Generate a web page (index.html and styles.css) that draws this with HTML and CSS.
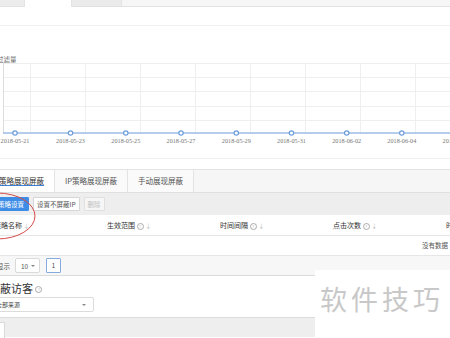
FILE: index.html
```html
<!DOCTYPE html>
<html lang="zh">
<head>
  <meta charset="UTF-8">
  <title>展现屏蔽</title>
  <link rel="stylesheet" href="styles.css">
</head>
<body>
  <div class="top-tabs">
    <span class="tt tt-a"></span>
    <span class="tt tt-b"></span>
    <span class="tt tt-c"></span>
  </div>
  <div class="head-strip"></div>

  <!-- 过滤量趋势 -->
  <div class="chart-box">
    <div class="chart-title">过滤量</div>
    <svg class="chart" width="450" height="95" viewBox="0 0 450 95">
      <g stroke="#efefef" stroke-width="1">
        <line x1="3" y1="0.5" x2="450" y2="0.5"/>
        <line x1="3" y1="14.5" x2="450" y2="14.5"/>
        <line x1="3" y1="28.5" x2="450" y2="28.5"/>
        <line x1="3" y1="43.5" x2="450" y2="43.5"/>
        <line x1="3" y1="57.5" x2="450" y2="57.5"/>
        <line x1="30.5" y1="0" x2="30.5" y2="70"/>
        <line x1="85.5" y1="0" x2="85.5" y2="70"/>
        <line x1="140.5" y1="0" x2="140.5" y2="70"/>
        <line x1="195.5" y1="0" x2="195.5" y2="70"/>
        <line x1="250.5" y1="0" x2="250.5" y2="70"/>
        <line x1="305.5" y1="0" x2="305.5" y2="70"/>
        <line x1="360.5" y1="0" x2="360.5" y2="70"/>
        <line x1="415.5" y1="0" x2="415.5" y2="70"/>
      </g>
      <line x1="3.5" y1="0" x2="3.5" y2="70" stroke="#dcdcdc"/>
      <line x1="3" y1="70" x2="450" y2="70" stroke="#9dbde6" stroke-width="1.5"/>
      <g fill="#fff" stroke="#6b9ddb" stroke-width="1.2">
        <circle cx="15" cy="70" r="2.2"/>
        <circle cx="70.5" cy="70" r="2.2"/>
        <circle cx="125.8" cy="70" r="2.2"/>
        <circle cx="181" cy="70" r="2.2"/>
        <circle cx="236.3" cy="70" r="2.2"/>
        <circle cx="291.5" cy="70" r="2.2"/>
        <circle cx="346.7" cy="70" r="2.2"/>
        <circle cx="401.8" cy="70" r="2.2"/>
      </g>
      <g class="axis-label" text-anchor="middle">
        <text x="15" y="80">2018-05-21</text>
        <text x="70.5" y="80">2018-05-23</text>
        <text x="125.8" y="80">2018-05-25</text>
        <text x="181" y="80">2018-05-27</text>
        <text x="236.3" y="80">2018-05-29</text>
        <text x="291.5" y="80">2018-05-31</text>
        <text x="346.7" y="80">2018-06-02</text>
        <text x="401.8" y="80">2018-06-04</text>
        <text x="457" y="80">2018-06-06</text>
      </g>
    </svg>
  </div>

  <div class="tabs">
    <div class="tab active"><span>策略展现屏蔽</span></div>
    <div class="tab"><span>IP策略展现屏蔽</span></div>
    <div class="tab"><span>手动展现屏蔽</span></div>
  </div>

  <div class="toolbar">
    <button class="btn btn-primary">策略设置</button>
    <button class="btn">设置不屏蔽IP</button>
    <button class="btn btn-disabled">删除</button>
  </div>

  <div class="thead">
    <div class="col">策略名称 <i class="sort">↓</i></div>
    <div class="col">生效范围 <i class="q">?</i> <i class="sort">↓</i></div>
    <div class="col">时间间隔 <i class="q">?</i> <i class="sort">↓</i></div>
    <div class="col">点击次数 <i class="q">?</i> <i class="sort">↓</i></div>
    <div class="col">时段</div>
  </div>
  <div class="empty-row">没有数据</div>
  <div class="pager">
    <span class="pager-label">每页显示</span>
    <span class="page-size">10 <i class="caret"></i></span>
    <span class="page-num">1</span>
  </div>

  <div class="visitor">
    <div class="visitor-title">屏蔽访客 <i class="q q-big">?</i></div>
    <div class="select">全部来源 <i class="caret"></i></div>
  </div>
  <div class="bottom-bar">
    <div class="mini-box"></div>
  </div>

  <div class="watermark">软件技巧</div>
  <svg class="mark" width="450" height="338">
    <ellipse cx="-3" cy="216" rx="38" ry="23" fill="none" stroke="#d64a4a" stroke-width="1"/>
  </svg>
</body>
</html>
```

FILE: styles.css
```css
body {
  margin: 0;
  width: 450px;
  height: 338px;
  overflow: hidden;
  position: relative;
  background: #fff;
  font-family: "Noto Sans CJK SC", sans-serif;
  font-size: 7px;
  color: #444;
}
i {
  font-style: normal;
}
.top-tabs {
  display: flex;
  height: 6px;
  background: #f6f6f6;
  border-bottom: 1px solid #e2e2e2;
}
.tt {
  border-right: 1px solid #e4e4e4;
}
.tt-a {
  width: 24px;
  background: #ececec;
}
.tt-b {
  width: 46px;
  height: 7px;
  background: #fff;
}
.tt-c {
  width: 49px;
  background: #ebebeb;
}
.head-strip {
  height: 18px;
  border-bottom: 1px solid #f0f0f0;
}
.chart-box {
  padding-top: 30px;
  border-bottom: 1px solid #eeeeee;
  margin-bottom: 10px;
}
.chart-title {
  height: 7px;
  line-height: 7px;
  font-size: 6.5px;
  color: #666;
  margin-left: -3px;
}
.chart {
  display: block;
}
.axis-label {
  font-family: "Liberation Serif", serif;
  font-size: 6.2px;
  fill: #777;
}
.tabs {
  display: flex;
  height: 22px;
  margin-left: -11px;
  background: #f6f6f6;
  border-top: 1px solid #e3e3e3;
  border-bottom: 1px solid #e0e0e0;
}
.tab {
  padding: 0 10px;
  line-height: 22px;
  font-size: 7.5px;
  color: #555;
  background: #fafafa;
  border-right: 1px solid #e3e3e3;
}
.tab.active {
  background: #fff;
}
.tab.active span {
  display: inline-block;
  line-height: 8px;
  color: #333;
  border-bottom: 1.5px solid #3a7fd8;
}
.toolbar {
  display: flex;
  align-items: center;
  gap: 4px;
  height: 22px;
  margin-left: -7px;
  background: #eeeeee;
}
.btn {
  height: 14px;
  padding: 0 3px;
  font-family: inherit;
  font-size: 6.5px;
  color: #555;
  background: #fff;
  border: 1px solid #d6d6d6;
  border-radius: 1px;
}
.btn-primary {
  padding: 0 4px;
  color: #fff;
  background: #3d8ce6;
  border-color: #3d8ce6;
}
.btn-disabled {
  color: #c0c0c0;
  background: #f6f6f6;
  border-color: #e0e0e0;
}
.thead {
  display: flex;
  align-items: center;
  height: 20px;
  margin-left: -6px;
  border-bottom: 1px solid #e6e6e6;
  color: #333;
}
.col {
  width: 113px;
  flex-shrink: 0;
}
.sort {
  color: #bbb;
  font-size: 6px;
}
.q {
  display: inline-block;
  width: 5px;
  height: 5px;
  line-height: 5px;
  text-align: center;
  font-size: 4px;
  color: #aaa;
  border: 0.8px solid #aaa;
  border-radius: 50%;
  vertical-align: 0;
}
.empty-row {
  height: 19px;
  line-height: 19px;
  text-align: right;
  padding-right: 2px;
  font-size: 6.5px;
  color: #555;
  border-bottom: 1px solid #e6e6e6;
}
.pager {
  display: flex;
  align-items: center;
  height: 19px;
  margin-left: -16px;
  background: #f7f7f7;
  border-bottom: 1px solid #dcdcdc;
}
.pager-label {
  font-size: 6.5px;
  color: #555;
  margin-right: 5px;
}
.page-size {
  display: flex;
  align-items: center;
  justify-content: space-between;
  box-sizing: border-box;
  width: 25px;
  height: 15px;
  padding: 0 4px 0 5px;
  font-size: 6.5px;
  color: #555;
  background: #fff;
  border: 1px solid #dadada;
  border-radius: 2px;
}
.caret {
  width: 0;
  height: 0;
  border-left: 2px solid transparent;
  border-right: 2px solid transparent;
  border-top: 2px solid #888;
}
.page-num {
  box-sizing: border-box;
  width: 15px;
  height: 15px;
  margin-left: 6px;
  line-height: 13px;
  text-align: center;
  font-size: 6px;
  color: #444;
  background: #fff;
  border: 1px solid #86acdf;
  border-radius: 1px;
}
.visitor {
  height: 41px;
  margin-left: -11px;
  padding-top: 5px;
  box-sizing: border-box;
}
.visitor-title {
  height: 16px;
  line-height: 14px;
  font-size: 11px;
  color: #333;
}
.q-big {
  width: 5px;
  height: 5px;
  vertical-align: 2px;
}
.select {
  display: flex;
  align-items: center;
  justify-content: space-between;
  box-sizing: border-box;
  width: 105px;
  height: 15px;
  padding: 0 7px 0 6px;
  font-size: 6px;
  color: #444;
  background: #fff;
  border: 1px solid #dcdcdc;
  border-radius: 2px;
}
.bottom-bar {
  height: 20px;
  padding-top: 4px;
  box-sizing: border-box;
  background: #eeeeee;
  border-top: 1px solid #dddddd;
}
.mini-box {
  width: 4px;
  height: 16px;
  background: #fff;
  border: 1px solid #dadada;
  border-left: none;
}
.watermark {
  position: absolute;
  left: 315px;
  top: 270px;
  width: 135px;
  height: 68px;
  padding: 14px 0 0 5px;
  box-sizing: border-box;
  background: #fff;
  font-size: 27px;
  line-height: 30px;
  letter-spacing: 4px;
  color: #c8c8c8;
}
.mark {
  position: absolute;
  left: 0;
  top: 0;
  pointer-events: none;
}
```
